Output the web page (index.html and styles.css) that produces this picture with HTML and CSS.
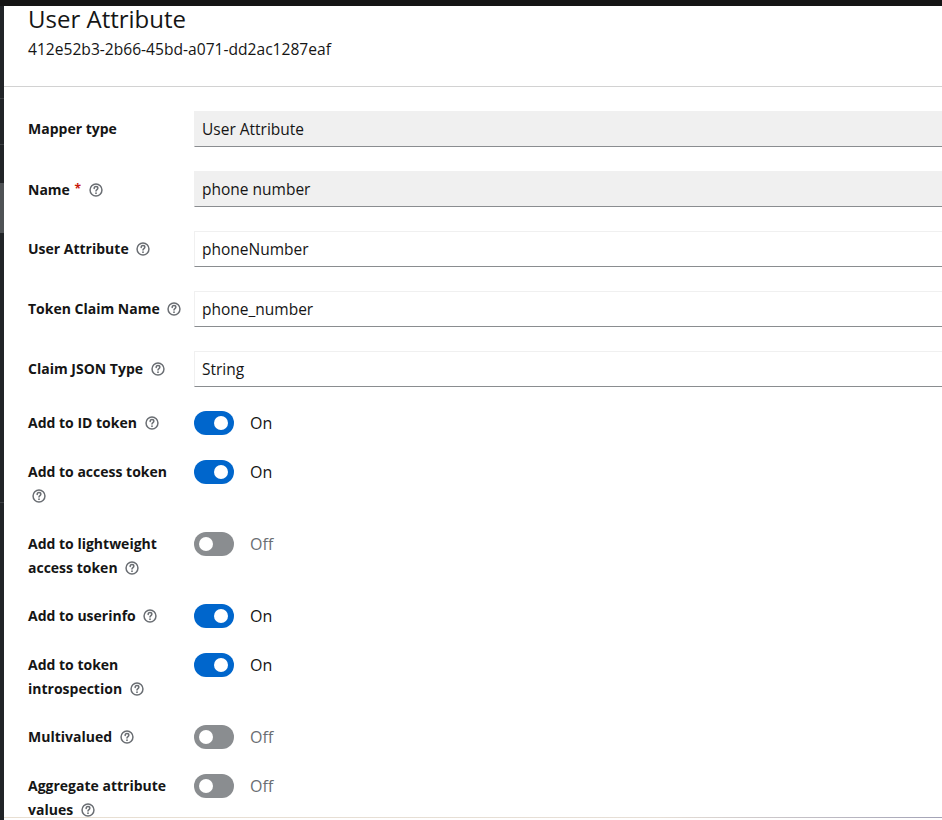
FILE: index.html
```html
<!DOCTYPE html>
<html lang="en">

<head>
    <meta charset="UTF-8">
    <meta name="viewport" content="width=device-width, initial-scale=1.0">
    <title>User Attribute - Mapper details</title>
    <link rel="stylesheet" href="styles.css">
</head>

<body>
    <div class="masthead"></div>

    <div class="layout">
        <nav class="sidebar">
            <div class="nav-group nav-top"></div>
            <div class="nav-group nav-realm"></div>
            <div class="nav-item"></div>
            <div class="nav-item active"></div>
            <div class="nav-group nav-manage"></div>
        </nav>

        <main class="page">
            <header class="page-header">
                <h1>User Attribute</h1>
                <p class="mapper-id">412e52b3-2b66-45bd-a071-dd2ac1287eaf</p>
            </header>

            <form class="mapper-form">
                <div class="form-group">
                    <label class="form-label">Mapper type</label>
                    <div class="form-control">
                        <input class="text-input" type="text" value="User Attribute" readonly>
                    </div>
                </div>

                <div class="form-group">
                    <label class="form-label">Name <span class="required">*</span> <span class="help"><svg viewBox="0 0 16 16"><circle cx="8" cy="8" r="6.8"/><path d="M5.9 6.2c0-1.3 1-2.1 2.1-2.1s2.1.8 2.1 1.9c0 1.5-2.1 1.6-2.1 3.2"/><circle class="dot" cx="8" cy="11.7" r="1"/></svg></span></label>
                    <div class="form-control">
                        <input class="text-input" type="text" value="phone number" readonly>
                    </div>
                </div>

                <div class="form-group">
                    <label class="form-label">User Attribute <span class="help"><svg viewBox="0 0 16 16"><circle cx="8" cy="8" r="6.8"/><path d="M5.9 6.2c0-1.3 1-2.1 2.1-2.1s2.1.8 2.1 1.9c0 1.5-2.1 1.6-2.1 3.2"/><circle class="dot" cx="8" cy="11.7" r="1"/></svg></span></label>
                    <div class="form-control">
                        <input class="text-input editable" type="text" value="phoneNumber">
                    </div>
                </div>

                <div class="form-group">
                    <label class="form-label">Token Claim Name <span class="help"><svg viewBox="0 0 16 16"><circle cx="8" cy="8" r="6.8"/><path d="M5.9 6.2c0-1.3 1-2.1 2.1-2.1s2.1.8 2.1 1.9c0 1.5-2.1 1.6-2.1 3.2"/><circle class="dot" cx="8" cy="11.7" r="1"/></svg></span></label>
                    <div class="form-control">
                        <input class="text-input editable" type="text" value="phone_number">
                    </div>
                </div>

                <div class="form-group">
                    <label class="form-label">Claim JSON Type <span class="help"><svg viewBox="0 0 16 16"><circle cx="8" cy="8" r="6.8"/><path d="M5.9 6.2c0-1.3 1-2.1 2.1-2.1s2.1.8 2.1 1.9c0 1.5-2.1 1.6-2.1 3.2"/><circle class="dot" cx="8" cy="11.7" r="1"/></svg></span></label>
                    <div class="form-control">
                        <input class="text-input editable" type="text" value="String">
                    </div>
                </div>

                <div class="form-group switch-group">
                    <label class="form-label">Add to ID token <span class="help"><svg viewBox="0 0 16 16"><circle cx="8" cy="8" r="6.8"/><path d="M5.9 6.2c0-1.3 1-2.1 2.1-2.1s2.1.8 2.1 1.9c0 1.5-2.1 1.6-2.1 3.2"/><circle class="dot" cx="8" cy="11.7" r="1"/></svg></span></label>
                    <div class="switch on"><span class="toggle"></span><span class="switch-label">On</span></div>
                </div>

                <div class="form-group switch-group">
                    <label class="form-label">Add to access token <span class="help"><svg viewBox="0 0 16 16"><circle cx="8" cy="8" r="6.8"/><path d="M5.9 6.2c0-1.3 1-2.1 2.1-2.1s2.1.8 2.1 1.9c0 1.5-2.1 1.6-2.1 3.2"/><circle class="dot" cx="8" cy="11.7" r="1"/></svg></span></label>
                    <div class="switch on"><span class="toggle"></span><span class="switch-label">On</span></div>
                </div>

                <div class="form-group switch-group">
                    <label class="form-label">Add to lightweight access token <span class="help"><svg viewBox="0 0 16 16"><circle cx="8" cy="8" r="6.8"/><path d="M5.9 6.2c0-1.3 1-2.1 2.1-2.1s2.1.8 2.1 1.9c0 1.5-2.1 1.6-2.1 3.2"/><circle class="dot" cx="8" cy="11.7" r="1"/></svg></span></label>
                    <div class="switch"><span class="toggle"></span><span class="switch-label">Off</span></div>
                </div>

                <div class="form-group switch-group">
                    <label class="form-label">Add to userinfo <span class="help"><svg viewBox="0 0 16 16"><circle cx="8" cy="8" r="6.8"/><path d="M5.9 6.2c0-1.3 1-2.1 2.1-2.1s2.1.8 2.1 1.9c0 1.5-2.1 1.6-2.1 3.2"/><circle class="dot" cx="8" cy="11.7" r="1"/></svg></span></label>
                    <div class="switch on"><span class="toggle"></span><span class="switch-label">On</span></div>
                </div>

                <div class="form-group switch-group">
                    <label class="form-label">Add to token introspection <span class="help"><svg viewBox="0 0 16 16"><circle cx="8" cy="8" r="6.8"/><path d="M5.9 6.2c0-1.3 1-2.1 2.1-2.1s2.1.8 2.1 1.9c0 1.5-2.1 1.6-2.1 3.2"/><circle class="dot" cx="8" cy="11.7" r="1"/></svg></span></label>
                    <div class="switch on"><span class="toggle"></span><span class="switch-label">On</span></div>
                </div>

                <div class="form-group switch-group">
                    <label class="form-label">Multivalued <span class="help"><svg viewBox="0 0 16 16"><circle cx="8" cy="8" r="6.8"/><path d="M5.9 6.2c0-1.3 1-2.1 2.1-2.1s2.1.8 2.1 1.9c0 1.5-2.1 1.6-2.1 3.2"/><circle class="dot" cx="8" cy="11.7" r="1"/></svg></span></label>
                    <div class="switch"><span class="toggle"></span><span class="switch-label">Off</span></div>
                </div>

                <div class="form-group switch-group">
                    <label class="form-label">Aggregate attribute values <span class="help"><svg viewBox="0 0 16 16"><circle cx="8" cy="8" r="6.8"/><path d="M5.9 6.2c0-1.3 1-2.1 2.1-2.1s2.1.8 2.1 1.9c0 1.5-2.1 1.6-2.1 3.2"/><circle class="dot" cx="8" cy="11.7" r="1"/></svg></span></label>
                    <div class="switch"><span class="toggle"></span><span class="switch-label">Off</span></div>
                </div>
            </form>
        </main>
    </div>

    <div class="window-edge"></div>
</body>

</html>
```

FILE: styles.css
```css
html,
body {
    margin: 0;
    height: 820px;
    overflow: hidden;
}

body {
    font-family: "Open Sans", "Liberation Sans", sans-serif;
    color: #151515;
    background-color: #fff;
}

.masthead {
    height: 6px;
    background-color: #151515;
}

.layout {
    display: flex;
    height: 814px;
}

/* collapsed nav, only its edge shows */
.sidebar {
    width: 4px;
    flex-shrink: 0;
    display: flex;
    flex-direction: column;
    background-color: #212427;
}

.nav-group {
    border-bottom: 1px solid #3c3f42;
    box-sizing: border-box;
}

.nav-top {
    height: 93px;
}

.nav-realm {
    height: 46px;
}

.nav-item {
    height: 38px;
}

.nav-item.active {
    height: 50px;
    background-color: #4f5255;
}

.nav-manage {
    height: 270px;
}

.page {
    flex: 1;
    min-width: 0;
    overflow-x: clip;
}

.page-header {
    padding: 0 24px 25px;
    border-bottom: 1px solid #d2d2d2;
}

.page-header h1 {
    margin: -2px 0 0;
    font-size: 24px;
    font-weight: 400;
    line-height: 30px;
}

.mapper-id {
    margin: 3px 0 0;
    font-size: 15.6px;
    line-height: 24px;
}

.mapper-form {
    display: flex;
    flex-direction: column;
    gap: 24px;
    padding: 24px 0 0 24px;
}

.form-group {
    display: grid;
    grid-template-columns: 160px 1fr;
    column-gap: 6px;
}

.form-label {
    padding-top: 6px;
    font-size: 14px;
    font-weight: 700;
    line-height: 24px;
}

.switch-group .form-label {
    padding-top: 0;
}

.required {
    margin-left: 1px;
    color: #c9190b;
    font-size: 12px;
    vertical-align: 2px;
}

.help {
    display: inline-block;
    padding: 0 4px;
    vertical-align: -2px;
    line-height: 0;
}

.help svg {
    width: 14px;
    height: 14px;
    fill: none;
    stroke: #6a6e73;
    stroke-width: 1.7;
    stroke-linecap: round;
}

.help .dot {
    fill: #6a6e73;
    stroke: none;
}

.form-control {
    margin-right: -4px;
}

.text-input {
    display: block;
    width: 100%;
    height: 36px;
    box-sizing: border-box;
    padding: 0 7px;
    border: 1px solid #f0f0f0;
    border-bottom-color: #8a8d90;
    background-color: #f0f0f0;
    font-family: inherit;
    font-size: 15.5px;
    color: #151515;
    outline: none;
}

.text-input.editable {
    background-color: #fff;
}

.switch {
    display: flex;
    align-items: flex-start;
    height: 25px;
}

.toggle {
    position: relative;
    width: 40px;
    height: 24px;
    border-radius: 12px;
    background-color: #8a8d90;
}

.toggle::before {
    content: "";
    position: absolute;
    top: 5px;
    left: 5px;
    width: 14px;
    height: 14px;
    border-radius: 50%;
    background-color: #fff;
}

.switch.on .toggle {
    background-color: #06c;
}

.switch.on .toggle::before {
    left: 20px;
}

.switch-label {
    margin-left: 16px;
    font-size: 16px;
    line-height: 24px;
    color: #6a6e73;
}

.switch.on .switch-label {
    color: #151515;
}

.window-edge {
    position: fixed;
    left: 4px;
    right: 0;
    bottom: 2px;
    height: 1px;
    background: linear-gradient(to right, #e8dfd2, #e6ded6 70%, #a3a3b6);
}
```
